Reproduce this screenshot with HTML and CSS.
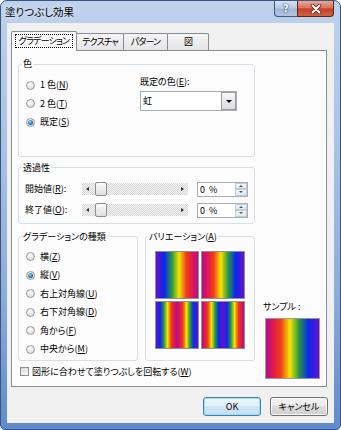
FILE: index.html
```html
<!DOCTYPE html>
<html lang="ja">
<head>
<meta charset="utf-8">
<title>塗りつぶし効果</title>
<link rel="stylesheet" href="styles.css">
</head>
<body>
<div class="window">
  <div class="titlebar">
    <span class="title">塗りつぶし効果</span>
    <div class="caption">
      <span class="cap-btn help">?</span>
      <span class="cap-btn close"><svg width="12" height="10" viewBox="0 0 12 10"><path d="M2.5 1.5L9.5 8.5M9.5 1.5L2.5 8.5" stroke="#5a211b" stroke-width="3.6" stroke-linecap="round"/><path d="M2.5 1.5L9.5 8.5M9.5 1.5L2.5 8.5" stroke="#fff" stroke-width="2" stroke-linecap="round"/></svg></span>
    </div>
  </div>
  <div class="client">
    <div class="tabs">
      <div class="tab active"><span class="focus">グラデーション</span></div>
      <div class="tab t2">テクスチャ</div>
      <div class="tab t3">パターン</div>
      <div class="tab t4">図</div>
    </div>
    <div class="panel">
      <div class="left">
        <fieldset class="grp g-color">
          <legend>色</legend>
          <div class="color-body">
            <div class="radios">
              <label class="opt"><span class="radio"></span>1 色(<u>N</u>)</label>
              <label class="opt"><span class="radio"></span>2 色(<u>T</u>)</label>
              <label class="opt"><span class="radio on"></span>既定(<u>S</u>)</label>
            </div>
            <div class="preset">
              <div class="preset-label">既定の色(<u>E</u>):</div>
              <div class="combo"><span class="combo-text">虹</span><span class="combo-btn"><span class="tri-down"></span></span></div>
            </div>
          </div>
        </fieldset>
        <fieldset class="grp g-trans">
          <legend>透過性</legend>
          <div class="trow">
            <span class="tlabel">開始値(<u>R</u>):</span>
            <div class="slider"><span class="arr-l"></span><span class="thumb"></span><span class="arr-r"></span></div>
            <div class="spin"><span class="spin-val">0 %</span><span class="spin-btns"><span class="sb"><span class="tri-up"></span></span><span class="sb"><span class="tri-dn"></span></span></span></div>
          </div>
          <div class="trow">
            <span class="tlabel">終了値(<u>O</u>):</span>
            <div class="slider"><span class="arr-l"></span><span class="thumb"></span><span class="arr-r"></span></div>
            <div class="spin"><span class="spin-val">0 %</span><span class="spin-btns"><span class="sb"><span class="tri-up"></span></span><span class="sb"><span class="tri-dn"></span></span></span></div>
          </div>
        </fieldset>
        <div class="lower">
          <fieldset class="grp g-type">
            <legend>グラデーションの種類</legend>
            <label class="opt"><span class="radio"></span>横(<u>Z</u>)</label>
            <label class="opt"><span class="radio on"></span>縦(<u>V</u>)</label>
            <label class="opt"><span class="radio"></span>右上対角線(<u>U</u>)</label>
            <label class="opt"><span class="radio"></span>右下対角線(<u>D</u>)</label>
            <label class="opt"><span class="radio"></span>角から(<u>F</u>)</label>
            <label class="opt"><span class="radio"></span>中央から(<u>M</u>)</label>
          </fieldset>
          <fieldset class="grp g-var">
            <legend>バリエーション(<u>A</u>)</legend>
            <div class="vgrid">
              <span class="vcell v1"></span>
              <span class="vcell v2"></span>
              <span class="vcell v3"></span>
              <span class="vcell v4"></span>
            </div>
          </fieldset>
        </div>
        <label class="check"><span class="cbox"></span>図形に合わせて塗りつぶしを回転する(<u>W</u>)</label>
      </div>
      <div class="sample">
        <div class="sample-label">サンプル :</div>
        <div class="sample-box"></div>
      </div>
    </div>
    <div class="buttons">
      <button class="btn default">OK</button>
      <button class="btn">キャンセル</button>
    </div>
  </div>
</div>
</body>
</html>
```
FILE: styles.css
```css
* { box-sizing: border-box; }
html, body { margin: 0; padding: 0; }
body {
  width: 341px;
  height: 430px;
  overflow: hidden;
  font-family: "Noto Sans CJK JP", "Noto Sans", sans-serif;
  font-size: 9px;
  line-height: 12px;
  font-feature-settings: "palt" 1;
  color: #000;
  background: #fff;
}
u { text-decoration: underline; text-underline-offset: 1px; }

.window {
  width: 341px;
  height: 430px;
  border: 1px solid #3a5680;
  border-radius: 7px 7px 5px 5px;
  background: linear-gradient(180deg, #bfd2ec 0%, #a9c1e4 35%, #8aabd9 70%, #5f8acc 100%);
  padding: 0 6px 6px;
  display: flex;
  flex-direction: column;
}

.titlebar {
  height: 22px;
  margin: 0 -6px;
  padding: 0 6px 0 4px;
  display: flex;
  justify-content: space-between;
  align-items: flex-start;
}
.title {
  font-size: 10.5px;
  line-height: 22px;
  text-shadow: 0 0 5px rgba(255, 255, 255, 0.9);
}
.caption { display: flex; }
.cap-btn {
  height: 16px;
  display: flex;
  align-items: center;
  justify-content: center;
  border: 1px solid #3d5a80;
  border-top: none;
}
.help {
  width: 23px;
  border-right: none;
  border-radius: 0 0 0 4px;
  background: linear-gradient(#d6e2f1, #b6c9e3 48%, #9fb6d7 52%, #afc4e0);
  color: #fff;
  font-family: "DejaVu Sans", sans-serif;
  font-weight: bold;
  font-size: 10px;
  text-shadow: 0 0 1px #2b466d, 0 0 2px #2b466d;
}
.close {
  width: 37px;
  border-color: #5d2520;
  border-radius: 0 0 4px 0;
  background: linear-gradient(#e9a898, #d8735f 45%, #c5402b 52%, #d2603f);
}

.client {
  flex: 1;
  background: #f0f0f0;
  padding: 8px 6px 0 4px;
  display: flex;
  flex-direction: column;
}

.tabs {
  display: flex;
  align-items: flex-end;
  height: 20px;
  margin-bottom: -1px;
  position: relative;
  z-index: 1;
}
.tab {
  height: 17px;
  margin-bottom: 1px;
  margin-left: -1px;
  border: 1px solid #898c95;
  border-bottom: none;
  border-radius: 2px 2px 0 0;
  background: linear-gradient(#f6f6f6, #e5e5e5);
  text-align: center;
  line-height: 15px;
  white-space: nowrap;
  letter-spacing: -0.8px;
}
.tab.active {
  width: 66px;
  height: 20px;
  margin: 0;
  background: #fcfcfc;
  position: relative;
  z-index: 2;
}
.focus {
  display: block;
  height: 14px;
  margin: 2px 3px 0;
  border: 1px dotted #000;
  line-height: 12px;
}
.t2 { width: 48px; }
.t3 { width: 45px; }
.t4 { width: 42px; }

.panel {
  width: 316px;
  height: 337px;
  border: 1px solid #898c95;
  background: #fcfcfc;
  padding: 7px 0 0 6px;
  display: grid;
  grid-template-columns: 237px auto;
  column-gap: 8px;
}
.left { display: flex; flex-direction: column; }

.grp {
  margin: 0;
  border: 1px solid #d5dfe5;
  border-radius: 3px;
  min-width: 0;
}
.grp legend {
  padding: 0 1px;
  margin-left: -3px;
  line-height: 12px;
  white-space: nowrap;
}

.g-color { padding: 6px 6px 24px; }
.color-body { display: flex; }
.radios { width: 115px; display: flex; flex-direction: column; }
.opt { display: flex; align-items: center; height: 18.5px; white-space: nowrap; }
.radio {
  width: 9px;
  height: 9px;
  margin: 0 5px 0 1px;
  border-radius: 50%;
  border: 1px solid #9a9b9c;
  background: radial-gradient(circle at 40% 35%, #fbfbfb, #d3d3d3);
  flex: none;
}
.radio.on::after {
  content: "";
  display: block;
  width: 5px;
  height: 5px;
  margin: 1px;
  border-radius: 50%;
  background: radial-gradient(circle at 40% 35%, #8ad6f7, #1f73b4 60%, #0c4a80);
}

.preset-label { line-height: 12px; white-space: nowrap; }
.combo {
  margin-top: 3px;
  width: 97px;
  height: 20px;
  border: 1px solid #a5acb5;
  background: #fff;
  display: flex;
  justify-content: space-between;
}
.combo-text { padding-left: 2px; line-height: 18px; }
.combo-btn {
  width: 15px;
  border: 1px solid #9c9c9c;
  background: linear-gradient(#f7f7f7, #dcdcdc);
  display: flex;
  align-items: center;
  justify-content: center;
}
.tri-down {
  width: 0;
  height: 0;
  border-left: 3px solid transparent;
  border-right: 3px solid transparent;
  border-top: 3px solid #000;
}

.g-trans { margin-top: 5px; padding: 5px 6px 2px; }
.trow { display: flex; align-items: center; height: 21px; }
.tlabel { width: 57px; white-space: nowrap; }
.slider {
  width: 106px;
  height: 12px;
  display: flex;
  align-items: center;
  background-color: #e6e6e6;
  background-image: conic-gradient(#d6d6d6 25%, #f6f6f6 0 50%, #d6d6d6 0 75%, #f6f6f6 0);
  background-size: 2px 2px;
}
.arr-l {
  margin-left: 4px;
  width: 0;
  height: 0;
  border-top: 2.5px solid transparent;
  border-bottom: 2.5px solid transparent;
  border-right: 3px solid #333;
}
.arr-r {
  margin: 0 4px 0 auto;
  width: 0;
  height: 0;
  border-top: 2.5px solid transparent;
  border-bottom: 2.5px solid transparent;
  border-left: 3px solid #333;
}
.thumb {
  margin-left: 6px;
  width: 12px;
  height: 14px;
  border: 1px solid #8d8d8d;
  border-radius: 2px;
  background: linear-gradient(#fbfbfb, #dedede);
  flex: none;
}
.spin {
  margin-left: 9px;
  width: 51px;
  height: 15px;
  border: 1px solid #abadb3;
  background: #fff;
  display: flex;
  justify-content: space-between;
}
.spin-val { padding-left: 2px; line-height: 13px; word-spacing: 2px; }
.spin-btns {
  width: 12px;
  display: flex;
  flex-direction: column;
}
.sb {
  flex: 1;
  border: 1px solid #c5ccd6;
  background: linear-gradient(#f4f7fb, #dfe6ef);
  display: flex;
  align-items: center;
  justify-content: center;
}
.tri-up {
  width: 0; height: 0;
  border-left: 2px solid transparent;
  border-right: 2px solid transparent;
  border-bottom: 2px solid #4a5a70;
}
.tri-dn {
  width: 0; height: 0;
  border-left: 2px solid transparent;
  border-right: 2px solid transparent;
  border-top: 2px solid #4a5a70;
}

.lower { display: flex; gap: 7px; margin-top: 7px; }
.g-type { width: 120px; padding: 5px 6px 1px; }
.g-var { width: 110px; padding: 8px 9px 0; }
.g-var legend { margin-left: -7px; }
.vgrid {
  display: grid;
  grid-template-columns: 44px 44px;
  grid-template-rows: 48px 48px;
  gap: 2px;
}
.vcell { border: 1px solid #8f8f8f; }
.v1 { background: linear-gradient(270deg, #b0108a 0%, #e51a4a 15%, #ee3f17 28%, #f5e600 45%, #2a9a40 62%, #0a28f0 80%, #6a10c8 100%); }
.v2 { background: linear-gradient(90deg, #b0108a 0%, #e51a4a 15%, #ee3f17 28%, #f5e600 45%, #2a9a40 62%, #0a28f0 80%, #6a10c8 100%); }
.v3 { background: linear-gradient(90deg, #6a10c8 0%, #0a28f0 10%, #2a9a40 19%, #f5e600 27.5%, #ee3f17 36%, #e51a4a 42.5%, #b0108a 50%, #e51a4a 57.5%, #ee3f17 64%, #f5e600 72.5%, #2a9a40 81%, #0a28f0 90%, #6a10c8 100%); }
.v4 { background: linear-gradient(90deg, #b0108a 0%, #e51a4a 7.5%, #ee3f17 14%, #f5e600 22.5%, #2a9a40 31%, #0a28f0 40%, #6a10c8 50%, #0a28f0 60%, #2a9a40 69%, #f5e600 77.5%, #ee3f17 86%, #e51a4a 92.5%, #b0108a 100%); }

.check {
  display: flex;
  align-items: center;
  height: 12px;
  margin-top: 5px;
  padding-left: 2px;
  white-space: nowrap;
}
.cbox {
  width: 9px;
  height: 9px;
  margin-right: 3px;
  border: 1px solid #8e8f8f;
  background: linear-gradient(135deg, #d8d8d8, #fbfbfb);
  flex: none;
}

.sample { align-self: end; margin-bottom: 7px; }
.sample-label { line-height: 12px; white-space: nowrap; }
.sample-box {
  margin: 5px 0 0 2px;
  width: 55px;
  height: 61px;
  border: 1px solid #9a9a9a;
  background: linear-gradient(90deg, #b0108a 0%, #e51a4a 15%, #ee3f17 28%, #f5e600 45%, #2a9a40 62%, #0a28f0 80%, #6a10c8 100%);
}

.buttons {
  display: flex;
  justify-content: flex-end;
  gap: 9px;
  margin-top: 10px;
}
.btn {
  width: 58px;
  height: 19px;
  padding: 0;
  font: inherit;
  color: #000;
  border: 1px solid #707070;
  border-radius: 3px;
  background: linear-gradient(#f2f2f2, #ebebeb 50%, #dddddd 50%, #cfcfcf);
  box-shadow: inset 0 0 0 1px #fafafa;
}
.btn.default {
  border-color: #3c7fb1;
  box-shadow: inset 0 0 0 1px #9fe0fb;
  background: linear-gradient(#eef7fc, #e2f0f9 50%, #d0e6f5 50%, #c2dff2);
}
```
